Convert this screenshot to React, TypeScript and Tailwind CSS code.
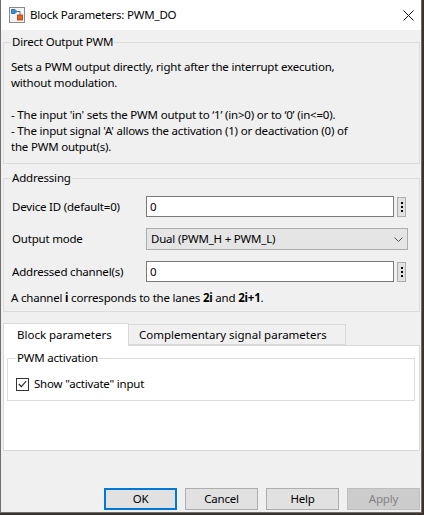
import React from "react";

const font = { fontFamily: '"Noto Sans", "Liberation Sans", sans-serif' };

function BlockIcon() {
  return (
    <svg width="16" height="16" viewBox="0 0 16 16">
      <rect x="0.5" y="0.5" width="15" height="15" fill="#f4f4f4" stroke="#8a8a8a" />
      <path d="M2.5 2.5 H6 L8 4.5 L6 6.5 H2.5 Z" fill="#2f8fd8" stroke="#1d5fa6" strokeWidth="0.8" />
      <path d="M8 4.5 H11 V8" fill="none" stroke="#555" strokeWidth="0.9" />
      <rect x="8.5" y="8" width="5" height="5" fill="#e8641e" stroke="#a63c0a" strokeWidth="0.8" />
    </svg>
  );
}

function Dots() {
  return (
    <div className="ml-[3px] flex h-[20px] w-[9px] flex-col items-center justify-center gap-[2px] border border-[#adadad] bg-[#e1e1e1]">
      <span className="h-[2px] w-[2px] bg-black" />
      <span className="h-[2px] w-[2px] bg-black" />
      <span className="h-[2px] w-[2px] bg-black" />
    </div>
  );
}

function Field({ label, value }: { label: string; value: string }) {
  return (
    <div className="flex h-[21px] items-center">
      <div className="w-[135px] pl-[1px]">{label}</div>
      <div className="flex h-[21px] w-[248px] items-center border border-[#7a7a7a] bg-white px-[3px]">{value}</div>
      <Dots />
    </div>
  );
}

function Button({ label, kind }: { label: string; kind?: "default" | "disabled" }) {
  const cls =
    kind === "default"
      ? "border-2 border-[#0078d7] bg-[#e1e1e1] text-black"
      : kind === "disabled"
      ? "border border-[#bfbfbf] bg-[#cccccc] text-[#838383]"
      : "border border-[#adadad] bg-[#e1e1e1] text-black";
  return (
    <div className={`flex h-[22px] w-[73px] items-center justify-center ${cls}`}>{label}</div>
  );
}

export default function App() {
  return (
    <div
      className="h-[515px] w-[424px] overflow-hidden bg-[#3a322b] text-[11.5px] leading-[16px] tracking-[-0.2px] text-black"
      style={font}
    >
      <div className="flex h-[513px] w-[422px] flex-col border-x border-b border-[#6e6e6e] bg-[#f0f0f0]">
        {/* title bar */}
        <div className="flex h-[30px] shrink-0 items-center bg-white pl-[8px]">
          <BlockIcon />
          <span className="ml-[5px]">Block Parameters: PWM_DO</span>
          <svg className="ml-auto mr-[7px]" width="11" height="11" viewBox="0 0 11 11">
            <path d="M0.5 0.5 L10.5 10.5 M10.5 0.5 L0.5 10.5" stroke="#111" strokeWidth="1" />
          </svg>
        </div>

        <div className="flex w-[419px] flex-1 flex-col pl-[2px] pt-[4px]">
          <fieldset className="border border-[#dcdcdc] pb-[8px] pl-[7px]">
            <legend className="px-[1px]">Direct Output PWM</legend>
            <div className="mt-[9px] whitespace-nowrap">
              Sets a PWM output directly, right after the interrupt execution,
              <br />
              without modulation.
              <br />
              <br />
              - The input 'in' sets the PWM output to ‘1’ (in&gt;0) or to ‘0’ (in&lt;=0).
              <br />
              - The input signal 'A' allows the activation (1) or deactivation (0) of
              <br />
              the PWM output(s).
            </div>
          </fieldset>

          <fieldset className="mt-[6px] border border-[#dcdcdc] pb-[5px] pl-[7px]">
            <legend className="px-[1px]">Addressing</legend>
            <div className="mt-[10px] flex flex-col">
              <Field label="Device ID (default=0)" value="0" />
              <div className="mt-[11px] flex h-[22px] items-center">
                <div className="w-[135px] pl-[1px]">Output mode</div>
                <div className="flex h-[22px] w-[262px] items-center justify-between border border-[#adadad] bg-[#e5e5e5] pl-[4px] pr-[4px]">
                  <span>Dual (PWM_H + PWM_L)</span>
                  <svg width="9" height="5" viewBox="0 0 9 5">
                    <path d="M0.5 0.5 L4.5 4.5 L8.5 0.5" fill="none" stroke="#555" strokeWidth="1" />
                  </svg>
                </div>
              </div>
              <div className="mt-[11px]">
                <Field label="Addressed channel(s)" value="0" />
              </div>
              <div className="mt-[8px] whitespace-nowrap">
                A channel <b>i</b> corresponds to the lanes <b>2i</b> and <b>2i+1</b>.
              </div>
            </div>
          </fieldset>

          {/* tabs */}
          <div className="mt-[11px] flex items-end">
            <div className="relative z-10 -mb-px flex h-[23px] w-[126px] items-center border border-b-0 border-[#d9d9d9] bg-white pl-[13px] tracking-[0px]">
              Block parameters
            </div>
            <div className="flex h-[21px] w-[217px] items-center border border-l-0 border-[#d9d9d9] bg-[#f0f0f0] pl-[10px] tracking-[0px]">
              Complementary signal parameters
            </div>
          </div>
          <div className="h-[106px] border border-[#d9d9d9] bg-white pl-[3px] pr-[4px] pt-[4px]">
            <fieldset className="border border-[#dcdcdc] pb-[8px] pl-[8px]">
              <legend className="px-[1px]">PWM activation</legend>
              <div className="mt-[10px] flex h-[16px] items-center">
                <div className="flex h-[13px] w-[13px] items-center justify-center border border-[#333] bg-white">
                  <svg width="9" height="8" viewBox="0 0 9 8">
                    <path d="M0.8 4 L3.4 6.6 L8.2 1" fill="none" stroke="#222" strokeWidth="1.1" />
                  </svg>
                </div>
                <span className="ml-[5px]">Show "activate" input</span>
              </div>
            </fieldset>
          </div>

          <div className="mb-[2px] mt-auto flex justify-end gap-[8px]">
            <Button label="OK" kind="default" />
            <Button label="Cancel" />
            <Button label="Help" />
            <Button label="Apply" kind="disabled" />
          </div>
        </div>
      </div>
    </div>
  );
}
